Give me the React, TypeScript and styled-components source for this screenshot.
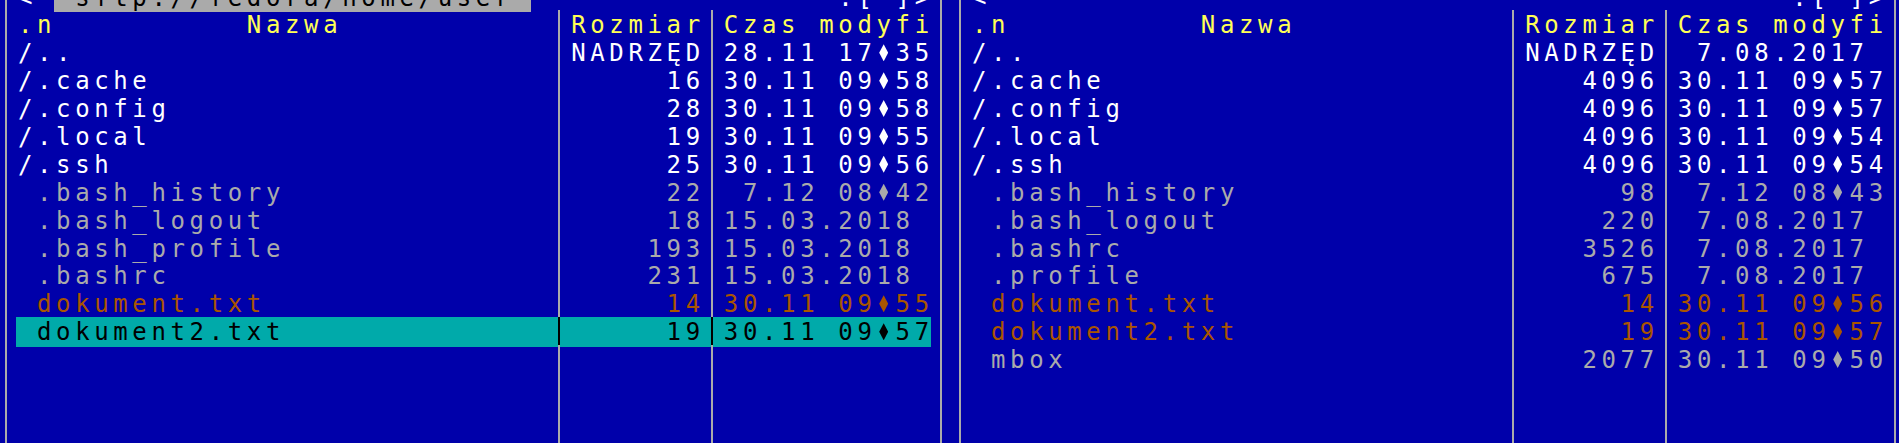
import React from 'react';
import styled, { createGlobalStyle } from 'styled-components';

const CW = 19.08;
const RH = 27.9;
const FS = 24;
const LS = CW - 0.60205 * FS;

const C = {
  bg: '#0000aa',
  line: '#aaaaaa',
  white: '#ffffff',
  gray: '#aaaaaa',
  yellow: '#ffff55',
  brown: '#aa5500',
  cyan: '#00aaaa',
  black: '#000000',
};

type Tone = 'dir' | 'file' | 'doc' | 'head' | 'sel' | 'title';
const toneColor: Record<Tone, string> = {
  dir: C.white,
  file: C.gray,
  doc: C.brown,
  head: C.yellow,
  sel: C.black,
  title: C.black,
};

const Global = createGlobalStyle`
  html, body { margin: 0; padding: 0; background: ${C.bg}; overflow: hidden; }
  body { width: 1899px; height: 443px; }
`;

const Screen = styled.div`
  display: flex;
  width: ${100 * CW}px;
  height: 480px;
  margin: -17.5px 0 0 -3.5px;
  background: ${C.bg};
  font-family: "DejaVu Sans Mono", "Liberation Mono", monospace;
  font-size: ${FS}px;
  letter-spacing: ${LS}px;
`;

const Panel = styled.section`
  display: flex;
  flex-direction: column;
  width: ${50 * CW}px;
`;

const Row = styled.div`
  display: grid;
  grid-template-columns: ${CW}px ${28 * CW}px ${CW}px ${7 * CW}px ${CW}px ${11 * CW}px ${CW}px;
  height: ${RH}px;
`;

const TitleRow = styled.div`
  display: grid;
  grid-template-columns: ${CW}px ${CW}px ${CW}px ${25 * CW}px 1fr ${5 * CW}px ${CW}px;
  height: ${RH}px;
`;

const Rule = styled.div<{ $dark?: boolean; $sel?: boolean; $off?: boolean }>`
  display: flex;
  justify-content: center;
  background: ${(p) => (p.$sel ? C.cyan : 'transparent')};
  &::before {
    content: '';
    width: 2px;
    height: 100%;
    background: ${(p) => (p.$off ? 'transparent' : p.$dark ? C.black : C.line)};
  }
`;

const Text = styled.div<{ $tone: Tone; $sel?: boolean }>`
  box-sizing: border-box;
  white-space: pre;
  color: ${(p) => toneColor[p.$tone]};
  background: ${(p) => (p.$sel ? C.cyan : 'transparent')};
  line-height: ${RH}px;
  padding: 2px 0 0 ${LS / 2}px;
`;

const TitleBox = styled(Text)<{ $active?: boolean }>`
  background: ${(p) => (p.$active ? C.gray : 'transparent')};
  color: ${(p) => (p.$active ? C.black : C.white)};
`;

const Diamond = styled.span`
  display: inline-block;
  width: ${CW}px;
  letter-spacing: 0;
  vertical-align: baseline;
  &::before {
    content: '';
    display: block;
    width: 9px;
    height: 17px;
    margin-left: ${CW / 2 - LS / 2 - 4.5}px;
    background: currentColor;
    clip-path: polygon(50% 0, 100% 50%, 50% 100%, 0 50%);
  }
`;

type Entry = { name: string; size: string; time: string; tone: Tone };

const leftFiles: Entry[] = [
  { name: '/..', size: 'NADRZĘD', time: '28.11 17♦35', tone: 'dir' },
  { name: '/.cache', size: '16', time: '30.11 09♦58', tone: 'dir' },
  { name: '/.config', size: '28', time: '30.11 09♦58', tone: 'dir' },
  { name: '/.local', size: '19', time: '30.11 09♦55', tone: 'dir' },
  { name: '/.ssh', size: '25', time: '30.11 09♦56', tone: 'dir' },
  { name: ' .bash_history', size: '22', time: ' 7.12 08♦42', tone: 'file' },
  { name: ' .bash_logout', size: '18', time: '15.03.2018', tone: 'file' },
  { name: ' .bash_profile', size: '193', time: '15.03.2018', tone: 'file' },
  { name: ' .bashrc', size: '231', time: '15.03.2018', tone: 'file' },
  { name: ' dokument.txt', size: '14', time: '30.11 09♦55', tone: 'doc' },
  { name: ' dokument2.txt', size: '19', time: '30.11 09♦57', tone: 'sel' },
];

const rightFiles: Entry[] = [
  { name: '/..', size: 'NADRZĘD', time: ' 7.08.2017', tone: 'dir' },
  { name: '/.cache', size: '4096', time: '30.11 09♦57', tone: 'dir' },
  { name: '/.config', size: '4096', time: '30.11 09♦57', tone: 'dir' },
  { name: '/.local', size: '4096', time: '30.11 09♦54', tone: 'dir' },
  { name: '/.ssh', size: '4096', time: '30.11 09♦54', tone: 'dir' },
  { name: ' .bash_history', size: '98', time: ' 7.12 08♦43', tone: 'file' },
  { name: ' .bash_logout', size: '220', time: ' 7.08.2017', tone: 'file' },
  { name: ' .bashrc', size: '3526', time: ' 7.08.2017', tone: 'file' },
  { name: ' .profile', size: '675', time: ' 7.08.2017', tone: 'file' },
  { name: ' dokument.txt', size: '14', time: '30.11 09♦56', tone: 'doc' },
  { name: ' dokument2.txt', size: '19', time: '30.11 09♦57', tone: 'doc' },
  { name: ' mbox', size: '2077', time: '30.11 09♦50', tone: 'file' },
];

const TimeText = ({ value }: { value: string }) => {
  const parts = value.split('♦');
  return (
    <>
      {parts.map((p, i) => (
        <React.Fragment key={i}>
          {i > 0 && <Diamond />}
          {p}
        </React.Fragment>
      ))}
    </>
  );
};

const FileRow = ({ e }: { e?: Entry }) => {
  const sel = e?.tone === 'sel';
  const tone: Tone = e ? e.tone : 'file';
  return (
    <Row>
      <Rule />
      <Text $tone={tone} $sel={sel}>{e ? e.name : ''}</Text>
      <Rule $sel={sel} $dark={sel} />
      <Text $tone={tone} $sel={sel}>{e ? e.size.padStart(7, ' ') : ''}</Text>
      <Rule $sel={sel} $dark={sel} />
      <Text $tone={tone} $sel={sel}>{e ? <TimeText value={e.time} /> : ''}</Text>
      <Rule />
    </Row>
  );
};

const FilePanel = ({ files, title }: { files: Entry[]; title?: string }) => {
  const rows: (Entry | undefined)[] = [...files];
  while (rows.length < 15) rows.push(undefined);
  return (
    <Panel>
      <TitleRow>
        <Rule />
        <Text $tone="dir">{'<'}</Text>
        <span />
        <TitleBox $tone="title" $active={!!title}>{title ?? ''}</TitleBox>
        <span />
        <Text $tone="dir">{'.[^]>'}</Text>
        <Rule />
      </TitleRow>
      <Row>
        <Rule />
        <Text $tone="head">{'.n          Nazwa'}</Text>
        <Rule />
        <Text $tone="head">Rozmiar</Text>
        <Rule />
        <Text $tone="head">Czas modyfi</Text>
        <Rule />
      </Row>
      {rows.map((e, i) => (
        <FileRow key={i} e={e} />
      ))}
    </Panel>
  );
};

export default function App() {
  return (
    <>
      <Global />
      <Screen>
        <FilePanel files={leftFiles} title=" sftp://fedora/home/user " />
        <FilePanel files={rightFiles} />
      </Screen>
    </>
  );
}
